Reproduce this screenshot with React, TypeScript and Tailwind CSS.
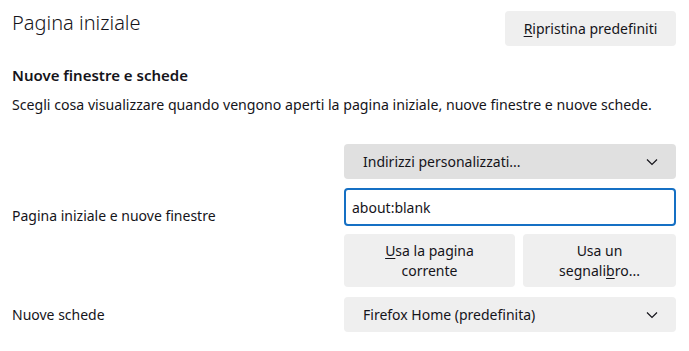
import React, { useState } from 'react';

function Chevron() {
  return (
    <svg width="12" height="8" viewBox="0 0 12 8" fill="none" className="shrink-0">
      <path d="M1 1.5 L6 6.5 L11 1.5" stroke="#15141a" strokeWidth="1.2" />
    </svg>
  );
}

export default function App() {
  const [url, setUrl] = useState('about:blank');

  return (
    <div className="w-[689px] h-[351px] bg-white text-[#15141a] font-['Noto_Sans',sans-serif] overflow-hidden">
      <div className="flex items-start justify-between pl-3 pr-[13px] pt-[11px]">
        <h1 className="text-[20px] font-light leading-[26px] -mt-[1px]">Pagina iniziale</h1>
        <button className="h-[35px] w-[171px] rounded bg-[#efefef] text-[14px]">
          <span className="underline underline-offset-2">R</span>ipristina predefiniti
        </button>
      </div>

      <div className="px-3 mt-[19px]">
        <h2 className="text-[15px] font-semibold leading-5">Nuove finestre e schede</h2>
        <p className="text-[14.15px] leading-5 mt-[10px]">
          Scegli cosa visualizzare quando vengono aperti la pagina iniziale, nuove finestre e nuove schede.
        </p>
      </div>

      <div className="grid grid-cols-[332px_332px] justify-between pl-3 pr-[13px] mt-[29px] gap-y-[10px]">
        <div className="text-[14px] flex items-center">Pagina iniziale e nuove finestre</div>
        <div className="flex flex-col">
          <div className="h-[35px] rounded bg-[#e0e0e0] flex items-center justify-between pl-[19px] pr-[18px] text-[14px]">
            <span>Indirizzi personalizzati...</span>
            <Chevron />
          </div>
          <input
            value={url}
            onChange={(e) => setUrl(e.target.value)}
            className="mt-[9px] h-[38px] rounded border-2 border-[#1570c4] px-[6px] text-[14px] outline-none"
          />
          <div className="mt-[8px] flex gap-2">
            <button className="h-[53px] w-[171px] rounded bg-[#efefef] text-[14px] leading-5">
              <span className="underline underline-offset-2">U</span>sa la pagina
              <br />
              corrente
            </button>
            <button className="h-[53px] flex-1 rounded bg-[#efefef] text-[14px] leading-5">
              Usa un
              <br />
              segnali<span className="underline underline-offset-2">b</span>ro...
            </button>
          </div>
        </div>

        <div className="text-[14px] flex items-center">Nuove schede</div>
        <div className="h-[35px] rounded bg-[#efefef] flex items-center justify-between pl-[19px] pr-[18px] text-[14px]">
          <span>Firefox Home (predefinita)</span>
          <Chevron />
        </div>
      </div>
    </div>
  );
}
